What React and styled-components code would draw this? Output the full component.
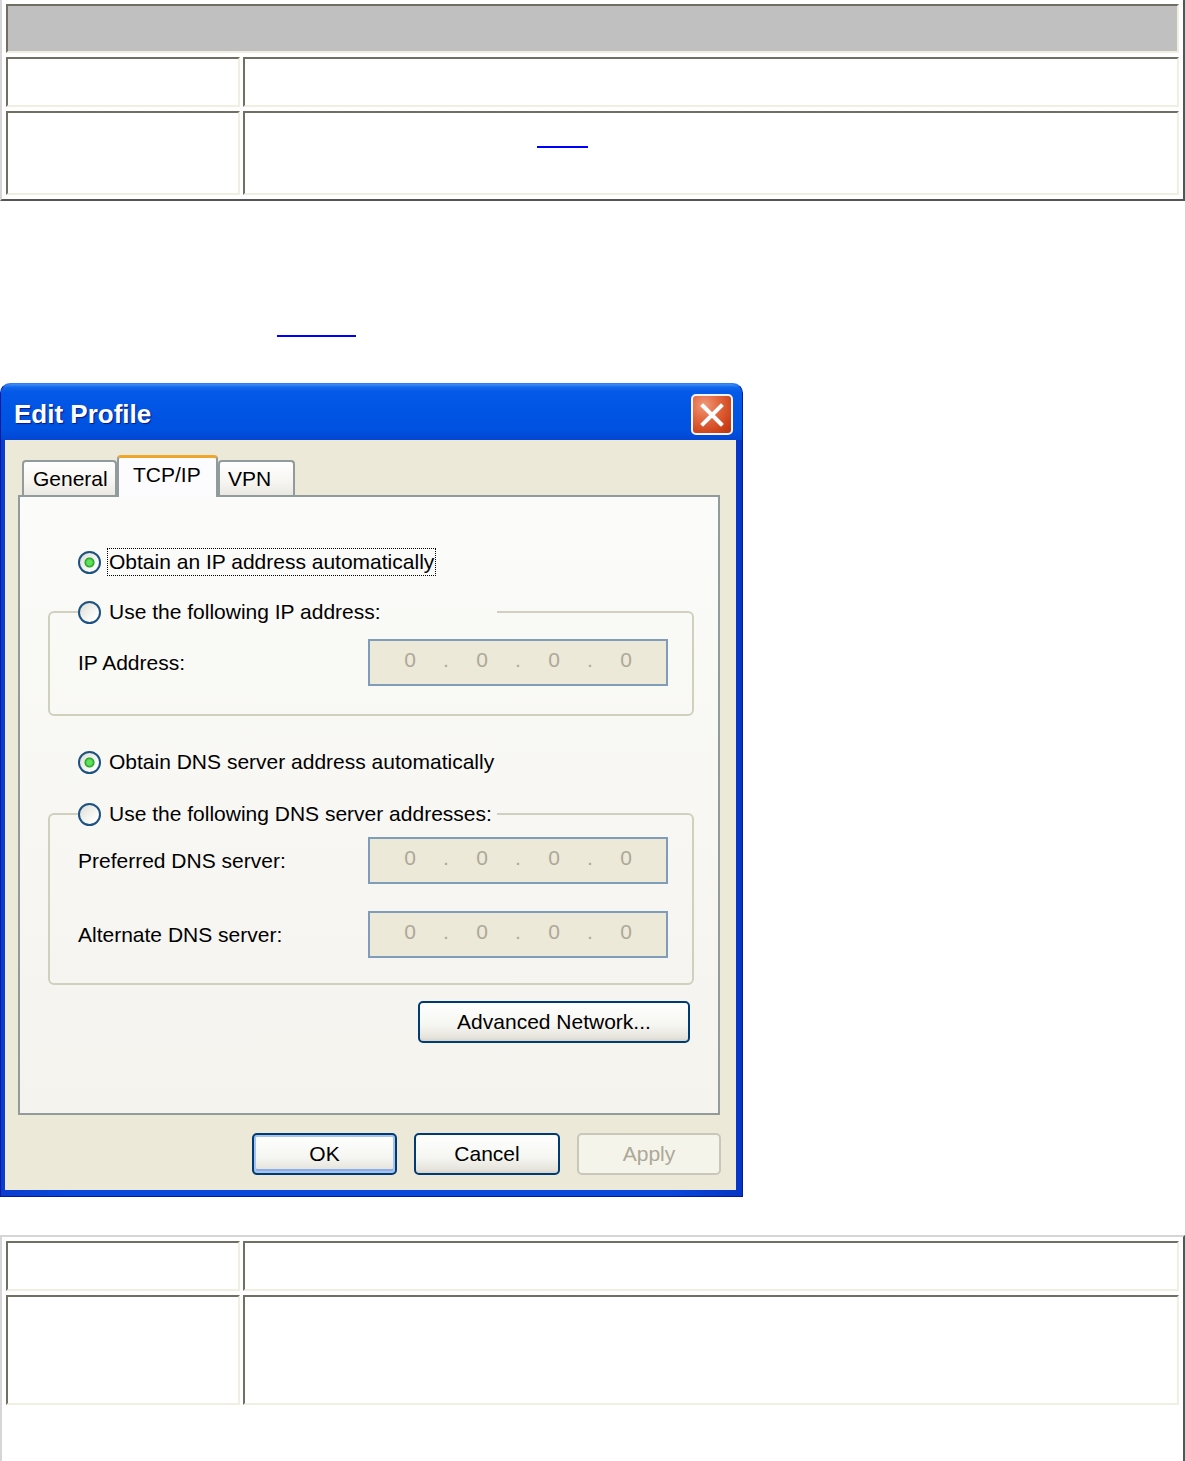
import styled, { createGlobalStyle } from "styled-components";

const GlobalStyle = createGlobalStyle`
  body {
    margin: 0;
    background: #ffffff;
    font-family: "Liberation Serif", serif;
  }
  * { box-sizing: border-box; }
`;

const Page = styled.div`
  display: flex;
  flex-direction: column;
  width: 1185px;
`;

const Frame = styled.div`
  display: grid;
  grid-template-columns: 234px 1fr;
  column-gap: 3px;
  row-gap: 4px;
  padding: 4px 4px ${(p) => p.$bottom || 4}px 4px;
  border: 2px solid;
  border-color: #d6d6d6 #555555 #555555 #d6d6d6;
  margin-top: ${(p) => p.$top || 0}px;
`;

const Cell = styled.div`
  display: flex;
  align-items: flex-start;
  height: ${(p) => p.$h}px;
  border: 2px solid;
  border-color: #716f64 #f1efe2 #f1efe2 #716f64;
  background: ${(p) => (p.$head ? "#c0c0c0" : "#ffffff")};
  grid-column: ${(p) => (p.$head ? "span 2" : "auto")};
`;

const LinkStub = styled.span`
  display: block;
  flex: none;
  width: ${(p) => p.$w}px;
  height: 2px;
  background: #0000ff;
  margin: ${(p) => p.$m};
`;

const Intro = styled.div`
  display: flex;
  align-items: flex-start;
  height: 182px;
  padding: 134px 0 0 277px;
`;

const Window = styled.div`
  width: 743px;
  display: flex;
  flex-direction: column;
  background: linear-gradient(to right, #0a3ccf, #0a48dc 10%, #0a48dc 90%, #0635c4);
  border: 1px solid #001c9c;
  border-top-color: #2f7df0;
  border-radius: 10px 10px 0 0;
  overflow: hidden;
`;

const TitleBar = styled.div`
  height: 56px;
  display: flex;
  align-items: center;
  justify-content: space-between;
  padding: 0 9px 0 13px;
  background: linear-gradient(
    to bottom,
    #3f8ff7 0%,
    #1167ec 6%,
    #0459e8 14%,
    #0055e5 45%,
    #0052e0 80%,
    #0346d3 100%
  );
`;

const Title = styled.span`
  font-family: "Liberation Sans", Arial, sans-serif;
  font-weight: 700;
  font-size: 26px;
  color: #ffffff;
  text-shadow: 1px 1px 1px #0a1883;
  margin-top: 4px;
`;

const CloseButton = styled.div`
  width: 42px;
  height: 41px;
  margin-top: 5px;
  display: flex;
  align-items: center;
  justify-content: center;
  border: 2px solid #f4f4f4;
  border-radius: 5px;
  background: radial-gradient(circle at 30% 25%, #ee9a7a 0%, #e46b43 35%, #cd431a 75%, #b83510 100%);
`;

const Body = styled.div`
  margin: 0 6px 6px 4px;
  padding: 15px 15px 15px 13px;
  background: #ece9d8;
  display: flex;
  flex-direction: column;
  font-family: "Liberation Sans", Arial, sans-serif;
  font-size: 21px;
  color: #000000;
`;

const TabRow = styled.div`
  display: flex;
  align-items: flex-end;
  padding-left: 4px;
  margin-bottom: -2px;
  position: relative;
  z-index: 1;
`;

const Tab = styled.div`
  width: ${(p) => p.$w}px;
  height: ${(p) => (p.$active ? 42 : 35)}px;
  margin-bottom: ${(p) => (p.$active ? 0 : 2)}px;
  display: flex;
  align-items: center;
  padding: 0 0 ${(p) => (p.$active ? 5 : 0)}px ${(p) => p.$pad}px;
  border: 2px solid #919b9c;
  border-bottom: none;
  border-top: ${(p) => (p.$active ? "3px solid #f0a52c" : "2px solid #919b9c")};
  border-radius: 4px 4px 0 0;
  background: ${(p) =>
    p.$active
      ? "#fcfcfe"
      : "linear-gradient(to bottom, #ffffff, #f6f5f1 60%, #e9e8e1)"};
`;

const Panel = styled.div`
  display: flex;
  flex-direction: column;
  margin-right: 1px;
  padding: 51px 24px 70px 28px;
  border: 2px solid #919b9c;
  background: linear-gradient(to bottom, #fbfbf9, #f4f3ee);
`;

const RadioLabel = styled.span`
  display: inline-flex;
  align-items: center;
  gap: 6px;
  height: 28px;
  margin-left: ${(p) => p.$indent || 0}px;
  margin-top: ${(p) => p.$top || 0}px;
  white-space: nowrap;
`;

const RadioDot = styled.span`
  width: 23px;
  height: 23px;
  flex: none;
  border-radius: 50%;
  border: 2px solid #1c5180;
  background: ${(p) =>
    p.$checked
      ? "radial-gradient(circle, #5fe05f 0 2.5px, #22a322 4.5px, transparent 5.5px), linear-gradient(135deg, #dcdcd5, #ffffff 80%)"
      : "linear-gradient(135deg, #dcdcd5, #ffffff 80%)"};
`;

const RadioText = styled.span`
  line-height: 24px;
  padding: 1px 1px;
  border: 1px ${(p) => (p.$focus ? "dotted #000000" : "solid transparent")};
`;

const Group = styled.fieldset`
  margin: ${(p) => p.$top}px 0 0 0;
  padding: ${(p) => p.$pad};
  min-width: 0;
  border: 2px solid #d0d0bf;
  border-radius: 6px;
`;

const Legend = styled.legend`
  width: 419px;
  padding: 0;
  height: 28px;
`;

const FieldRow = styled.div`
  display: flex;
  align-items: center;
  justify-content: space-between;
  & + & {
    margin-top: 27px;
  }
`;

const IpBox = styled.div`
  width: 300px;
  height: 47px;
  display: flex;
  align-items: center;
  padding: 0 0 6px 12px;
  border: 2px solid #7f9db9;
  background: #ece9d8;
  color: #aca899;
`;

const Octet = styled.span`
  width: 56px;
  text-align: center;
`;

const Dot = styled.span`
  width: 16px;
  text-align: center;
`;

const XpButton = styled.button`
  width: ${(p) => p.$w}px;
  height: 42px;
  font-family: "Liberation Sans", Arial, sans-serif;
  font-size: 21px;
  color: ${(p) => (p.disabled ? "#aca899" : "#000000")};
  border: 2px solid ${(p) => (p.disabled ? "#c9c7ba" : "#003c74")};
  border-radius: 5px;
  background: ${(p) =>
    p.disabled
      ? "#f5f4ea"
      : "linear-gradient(to bottom, #ffffff, #f5f5f1 60%, #e6e4dc 90%, #d8d4c9)"};
  box-shadow: ${(p) =>
    p.$primary ? "inset 0 0 0 2px #a9c3ef, inset 0 -2px 0 2px #8aaee8" : "none"};
  padding: 0;
`;

const AdvancedRow = styled.div`
  display: flex;
  justify-content: flex-end;
  margin-top: 16px;
  padding-right: 4px;
`;

const ButtonRow = styled.div`
  display: flex;
  justify-content: flex-end;
  gap: 17px;
  margin-top: 18px;
`;

const IpField = () => (
  <IpBox>
    <Octet>0</Octet>
    <Dot>.</Dot>
    <Octet>0</Octet>
    <Dot>.</Dot>
    <Octet>0</Octet>
    <Dot>.</Dot>
    <Octet>0</Octet>
  </IpBox>
);

const Radio = ({ checked, focus, children }) => (
  <>
    <RadioDot $checked={checked} />
    <RadioText $focus={focus}>{children}</RadioText>
  </>
);

const EditProfile = () => (
  <Window>
    <TitleBar>
      <Title>Edit Profile</Title>
      <CloseButton>
        <svg width="24" height="24" viewBox="0 0 24 24">
          <path d="M3 3 L21 21 M21 3 L3 21" stroke="#ffffff" strokeWidth="4" strokeLinecap="square" />
        </svg>
      </CloseButton>
    </TitleBar>
    <Body>
      <TabRow>
        <Tab $w={95} $pad={9}>General</Tab>
        <Tab $w={101} $pad={14} $active>TCP/IP</Tab>
        <Tab $w={77} $pad={8}>VPN</Tab>
      </TabRow>
      <Panel>
        <RadioLabel $indent={30}>
          <Radio checked focus>Obtain an IP address automatically</Radio>
        </RadioLabel>
        <Group $top={22} $pad="13px 24px 28px 28px">
          <Legend>
            <RadioLabel>
              <Radio>Use the following IP address:</Radio>
            </RadioLabel>
          </Legend>
          <FieldRow>
            <span>IP Address:</span>
            <IpField />
          </FieldRow>
        </Group>
        <RadioLabel $indent={30} $top={32}>
          <Radio checked>Obtain DNS server address automatically</Radio>
        </RadioLabel>
        <Group $top={24} $pad="9px 24px 25px 28px">
          <Legend>
            <RadioLabel>
              <Radio>Use the following DNS server addresses:</Radio>
            </RadioLabel>
          </Legend>
          <FieldRow>
            <span>Preferred DNS server:</span>
            <IpField />
          </FieldRow>
          <FieldRow>
            <span>Alternate DNS server:</span>
            <IpField />
          </FieldRow>
        </Group>
        <AdvancedRow>
          <XpButton $w={272}>Advanced Network...</XpButton>
        </AdvancedRow>
      </Panel>
      <ButtonRow>
        <XpButton $w={145} $primary>OK</XpButton>
        <XpButton $w={146}>Cancel</XpButton>
        <XpButton $w={144} disabled>Apply</XpButton>
      </ButtonRow>
    </Body>
  </Window>
);

const App = () => (
  <>
    <GlobalStyle />
    <Page>
      <Frame $top={-2}>
        <Cell $head $h={49} />
        <Cell $h={50} />
        <Cell $h={50} />
        <Cell $h={84} />
        <Cell $h={84}>
          <LinkStub $w={51} $m="33px 0 0 292px" />
        </Cell>
      </Frame>
      <Intro>
        <LinkStub $w={79} $m="0" />
      </Intro>
      <EditProfile />
      <Frame $top={38} $bottom={120}>
        <Cell $h={50} />
        <Cell $h={50} />
        <Cell $h={110} />
        <Cell $h={110} />
      </Frame>
    </Page>
  </>
);

export default App;
